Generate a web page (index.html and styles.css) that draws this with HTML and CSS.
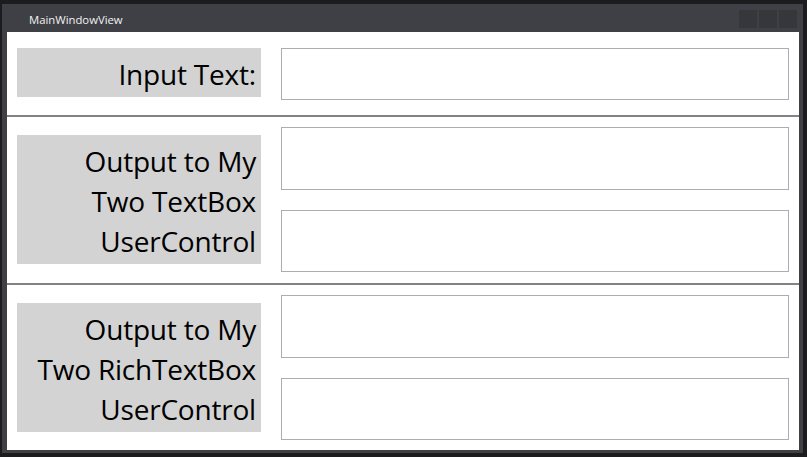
FILE: index.html
```html
<!DOCTYPE html>
<html>
<head>
<meta charset="utf-8">
<link rel="stylesheet" href="styles.css">
</head>
<body>
<div class="window">
  <div class="titlebar">
    <span class="title">MainWindowView</span>
    <div class="buttons">
      <span class="btn"></span><span class="btn"></span><span class="btn"></span>
    </div>
  </div>
  <div class="content">
    <div class="row row1">
      <div class="label">Input Text:</div>
      <div class="boxes">
        <div class="box"></div>
      </div>
    </div>
    <div class="sep"></div>
    <div class="row row2">
      <div class="label">Output to My<br>Two TextBox<br>UserControl</div>
      <div class="boxes">
        <div class="box"></div>
        <div class="box"></div>
      </div>
    </div>
    <div class="sep"></div>
    <div class="row row3">
      <div class="label">Output to My<br>Two RichTextBox<br>UserControl</div>
      <div class="boxes">
        <div class="box"></div>
        <div class="box"></div>
      </div>
    </div>
  </div>
</div>
</body>
</html>
```

FILE: styles.css
```css
html, body {
  margin: 0;
  padding: 0;
  background: #1c1c1e;
  width: 807px;
  height: 457px;
  overflow: hidden;
}
.window {
  margin: 4px 4px 4px 2px;
  height: 449px;
  width: 801px;
  box-sizing: border-box;
  background: #3f4046;
  padding: 0 4px 3px 5px;
  display: flex;
  flex-direction: column;
}
.titlebar {
  height: 28px;
  display: flex;
  align-items: center;
  justify-content: space-between;
}
.title {
  font-family: "Open Sans", "Noto Sans", sans-serif;
  font-size: 11.3px;
  color: #f2f2f2;
  padding-left: 22px;
  margin-top: 3px;
}
.buttons {
  display: flex;
  gap: 2px;
  margin-right: 2px;
  margin-top: 2px;
}
.btn {
  width: 18px;
  height: 18px;
  background: #36363b;
}
.content {
  flex: 1;
  background: #ffffff;
  display: flex;
  flex-direction: column;
}
.sep {
  height: 2px;
  background: #828282;
}
.row {
  display: flex;
  box-sizing: border-box;
  padding: 0 10px;
}
.row1 {
  height: 83px;
  padding-top: 16px;
  padding-bottom: 15px;
  align-items: flex-start;
}
.row2 {
  height: 166px;
  padding-top: 10px;
  padding-bottom: 11px;
  align-items: center;
}
.row3 {
  height: 165px;
  padding-top: 10px;
  padding-bottom: 10px;
  align-items: center;
}
.label {
  width: 244px;
  flex: none;
  box-sizing: border-box;
  background: #d3d3d3;
  padding: 6px 5px 3px 5px;
  text-align: right;
  font-family: "Open Sans", "Noto Sans", sans-serif;
  font-size: 28px;
  letter-spacing: -0.2px;
  line-height: 40px;
  color: #000;
  white-space: nowrap;
}
.boxes {
  margin-left: 20px;
  flex: 1;
  align-self: stretch;
  display: flex;
  flex-direction: column;
  gap: 20px;
}
.row1 .boxes {
  align-self: flex-start;
}
.row1 .box {
  height: 52px;
  flex: none;
}
.box {
  flex: 1;
  border: 1px solid #abadb3;
  box-sizing: border-box;
}
```
